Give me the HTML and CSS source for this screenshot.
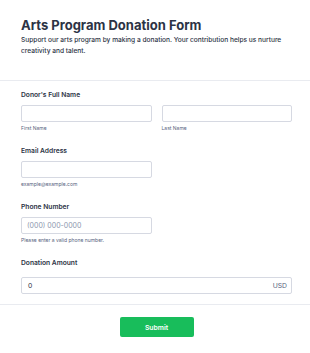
FILE: index.html
```html
<!DOCTYPE html>
<html lang="en">
<head>
<meta charset="utf-8">
<title>Arts Program Donation Form</title>
<link rel="stylesheet" href="styles.css">
</head>
<body>
<form class="form">
  <header class="header">
    <h1 class="title">Arts Program Donation Form</h1>
    <p class="subtitle">Support our arts program by making a donation. Your contribution helps us nurture creativity and talent.</p>
  </header>
  <section class="body">
    <div class="field">
      <div class="label">Donor's Full Name</div>
      <div class="name-row">
        <div class="col">
          <input class="input" type="text">
          <div class="sub">First Name</div>
        </div>
        <div class="col">
          <input class="input" type="text">
          <div class="sub">Last Name</div>
        </div>
      </div>
    </div>
    <div class="field">
      <div class="label">Email Address</div>
      <input class="input input-half" type="text">
      <div class="sub">example@example.com</div>
    </div>
    <div class="field">
      <div class="label">Phone Number</div>
      <input class="input input-half" type="text" placeholder="(000) 000-0000">
      <div class="sub">Please enter a valid phone number.</div>
    </div>
    <div class="field field-amount">
      <div class="label label-amount">Donation Amount</div>
      <div class="amount">
        <span class="amount-value">0</span>
        <span class="amount-cur">USD</span>
      </div>
    </div>
  </section>
  <footer class="footer">
    <button class="submit" type="button">Submit</button>
  </footer>
</form>
</body>
</html>
```
FILE: styles.css
```css
* { box-sizing: border-box; }
html, body { margin: 0; padding: 0; background: #fff; }
body {
  font-family: Inter, "Noto Sans", sans-serif;
  color: #2c3345;
}
.header {
  height: 81px;
  padding: 16px 21px 0;
  border-bottom: 1px solid #e9ebf0;
}
.title {
  margin: 0;
  font-size: 13px;
  line-height: 19px;
  font-weight: 700;
  color: #2c3345;
}
.subtitle {
  margin: 0;
  font-size: 6.6px;
  line-height: 11px;
  font-weight: 500;
  color: #2c3345;
}
.body {
  padding: 8px 18px 0 21px;
}
.field {
  margin-bottom: 12px;
}
.label {
  font-size: 6.7px;
  line-height: 12px;
  font-weight: 600;
  color: #2c3345;
  margin-bottom: 4px;
}
.name-row {
  display: grid;
  grid-template-columns: 1fr 1fr;
  column-gap: 10px;
}
.input {
  display: block;
  width: 100%;
  height: 17px;
  margin: 0;
  padding: 0 5px;
  border: 1px solid #d6d9e2;
  border-radius: 2px;
  font-family: inherit;
  font-size: 7px;
  color: #2c3345;
  background: #fff;
  outline: none;
}
.input-half { width: 130.5px; }
.input::placeholder { color: #8d97ad; }
.sub {
  margin-top: 2px;
  font-size: 5px;
  line-height: 9px;
  color: #57647e;
}
.label-amount { margin-bottom: 8px; }
.amount {
  display: flex;
  justify-content: space-between;
  align-items: center;
  height: 17px;
  padding: 0 4px 0 6px;
  border: 1px solid #d6d9e2;
  border-radius: 2px;
  font-size: 6.8px;
  color: #2c3345;
}
.amount-cur { color: #57647e; }
.footer {
  margin-top: -2px;
  border-top: 1px solid #e9ebf0;
  display: flex;
  justify-content: center;
  padding-top: 12px;
}
.submit {
  width: 74px;
  height: 20px;
  margin-left: 3px;
  border: 0;
  border-radius: 2px;
  background: #18bd5b;
  color: #fff;
  font-family: inherit;
  font-size: 6.8px;
  font-weight: 600;
}
```
